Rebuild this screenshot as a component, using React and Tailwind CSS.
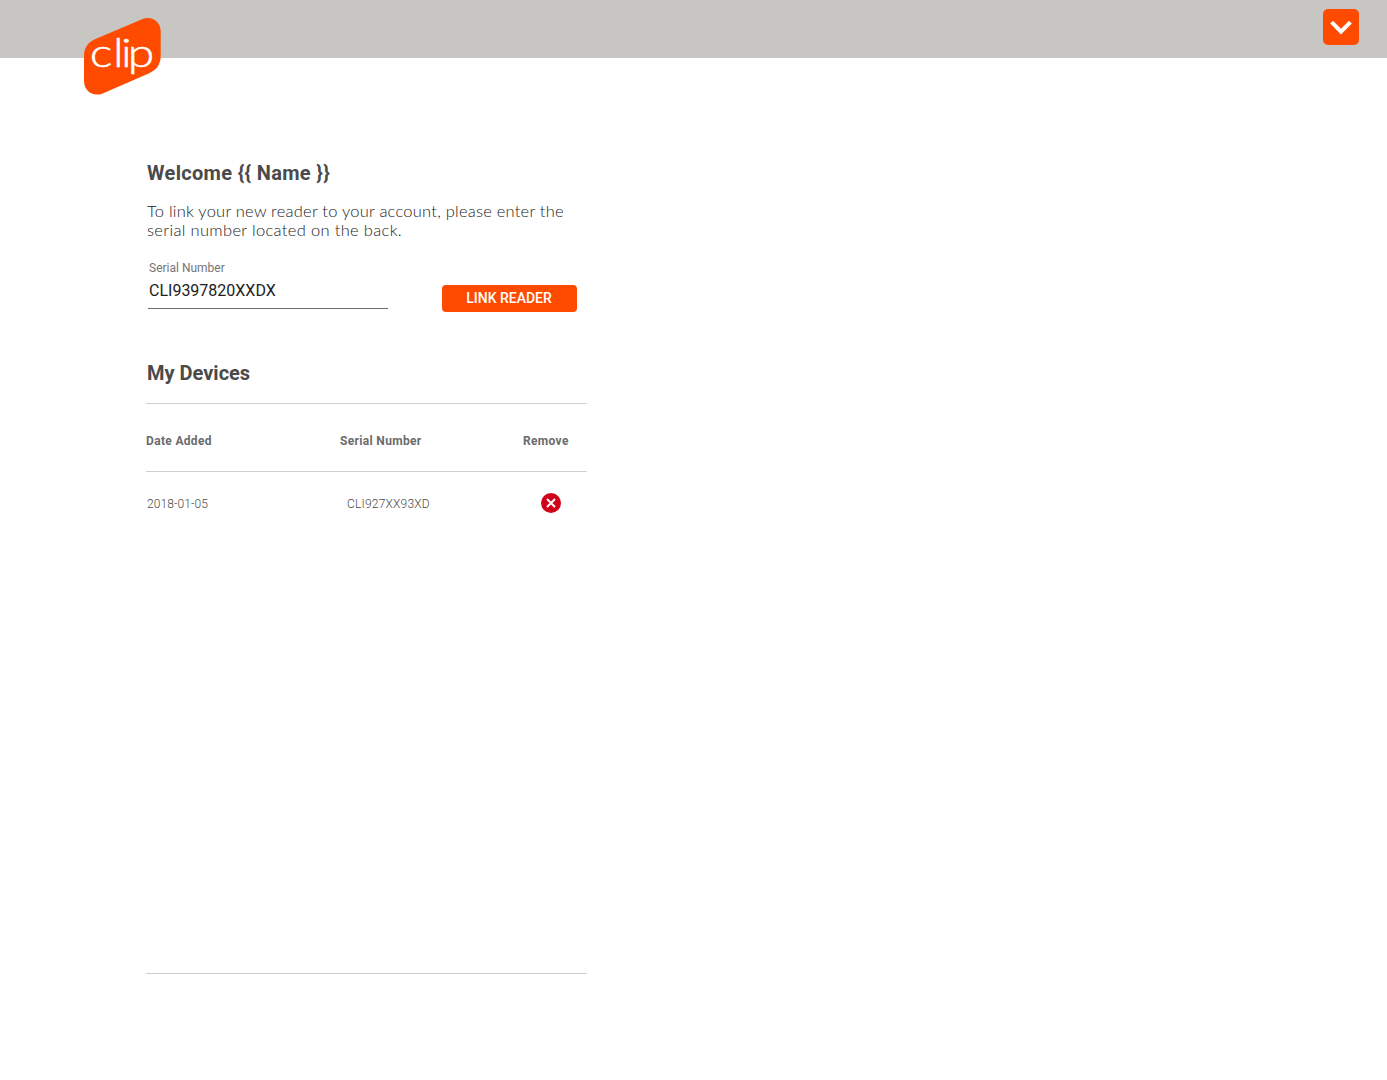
function Logo() {
  return (
    <svg className="absolute left-[84px] top-[17px]" width="78" height="79" viewBox="84 17 78 79" aria-label="clip">
      <path
        d="M84 56C84 48 88 42 95.500 39L142 19.200C151.500 15.200 160.700 21.500 160.700 31.500V56C160.700 64 156.700 70 149.200 73.200L102.700 93.400C93.200 97.400 84 91 84 81Z"
        fill="#ff4b00"
      />
      <text
        transform="scale(1.200 1)"
        x="74.800 94.200 100.900 106.400"
        y="67"
        fill="#fff"
        stroke="#fff"
        strokeWidth="0.5"
        fontSize="40"
        className="font-['Lato',sans-serif] font-light"
      >
        clip
      </text>
    </svg>
  );
}

function Header() {
  return (
    <header className="relative flex h-[58px] items-start justify-end bg-[#c8c6c2] pr-7 pt-[9px]">
      <Logo />
      <button className="flex size-9 items-center justify-center rounded-[5px] bg-[#ff4b00]" aria-label="Open menu">
        <svg width="36" height="36" viewBox="0 0 36 36" fill="none">
          <path d="M8.600 13.200L18 22.700L27.400 13.200" stroke="#fff" strokeWidth="4" />
        </svg>
      </button>
    </header>
  );
}

const devices = [{ date: "2018-01-05", serial: "CLI927XX93XD" }];

export default function App() {
  return (
    <div className="min-h-screen bg-white font-['Roboto',sans-serif]">
      <Header />
      <main className="ml-[146px] w-[441px] pt-[102px]">
        <h1 className="ml-px h-[27px] whitespace-nowrap text-xl leading-[27px] font-bold tracking-[0.32px] text-[#4a4a4a]">
          Welcome {"{{ Name }}"}
        </h1>
        <p className="ml-px mt-[15px] whitespace-nowrap font-['Lato',sans-serif] text-[16.5px] leading-[19px] font-light text-[#222222]">
          <span className="block tracking-[0.23px]">To link your new reader to your account, please enter the</span>
          <span className="block tracking-[0.33px]">serial number located on the back.</span>
        </p>
        <form className="ml-0.5 mt-[19px] flex h-[53px] items-start">
          <div className="h-[50px] w-60 border-b border-[#6b6b6b] pl-px">
            <label className="block h-[18px] text-xs leading-[18px] text-[#757575]">Serial Number</label>
            <div className="mt-0.5 text-base leading-6 text-[#212121]">CLI9397820XXDX</div>
          </div>
          <button
            type="button"
            className="ml-[54px] mt-[26px] h-[27px] w-[135px] rounded bg-[#ff4b00] pr-px text-sm leading-[27px] font-medium text-white"
          >
            LINK READER
          </button>
        </form>
        <h2 className="ml-px mt-12 h-[43px] text-xl leading-[27px] font-bold text-[#4a4a4a]">My Devices</h2>
        <section className="h-[571px] border-y border-[#cfcfcf]">
          <div className="grid h-[68px] grid-cols-[194px_182px_1fr] items-center border-b border-[#cfcfcf] pt-[7px] text-xs font-bold tracking-[0.33px] text-[#6b6b6b]">
            <span>Date Added</span>
            <span>Serial Number</span>
            <span className="pl-px">Remove</span>
          </div>
          {devices.map((d) => (
            <div key={d.serial} className="grid h-[62px] grid-cols-[200px_194px_1fr] items-center pl-px text-xs font-light text-[#4a4a4a]">
              <span className="pt-px tracking-[0.1px]">{d.date}</span>
              <span className="pt-px tracking-[0.2px]">{d.serial}</span>
              <button className="size-5" aria-label="Remove device">
                <svg width="20" height="20" viewBox="0 0 20 20">
                  <circle cx="10" cy="10" r="10" fill="#d0021b" />
                  <path d="M6 6L14 14M14 6L6 14" stroke="#fff" strokeWidth="2" />
                </svg>
              </button>
            </div>
          ))}
        </section>
      </main>
    </div>
  );
}
